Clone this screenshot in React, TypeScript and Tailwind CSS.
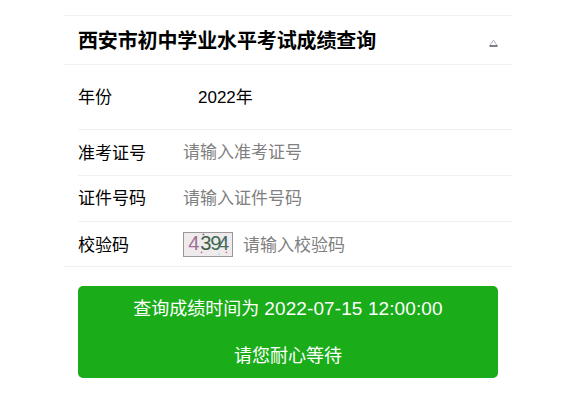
const cjk = "font-['Liberation_Sans','Noto_Sans_CJK_SC',sans-serif]";

function Captcha() {
  return (
    <svg width="50" height="25" viewBox="0 0 50 25" className="mt-[1px] block shrink-0 border border-[#999] bg-[#efeaec]">
      <text y="19" fontSize="22" fontFamily="Liberation Sans">
        <tspan x="3.5" fill="#a06f97">4</tspan>
        <tspan x="16.5" fill="#3c5f4a">3</tspan>
        <tspan x="27.5" fill="#3d6a55">9</tspan>
        <tspan x="36" fill="#4a6a5c">4</tspan>
      </text>
      <circle cx="20" cy="1.5" r="1" fill="#8a5a9a" />
      <circle cx="18" cy="21" r="1" fill="#b5708a" />
      <circle cx="37" cy="23" r="1" fill="#a8dbe4" />
      <circle cx="45" cy="21" r="1" fill="#c080a8" />
      <circle cx="44" cy="8" r="1" fill="#4a6a8a" />
    </svg>
  );
}

export default function App() {
  return (
    <div className={`${cjk} min-h-[412px] bg-white pt-[15px] text-[17px] text-black`}>
      <div className="ml-[64px] w-[448px]">
        <div className="flex h-[50px] items-center justify-between border-y border-[#f1f1f1] pl-[14px] pr-[15px]">
          <h1 className="pt-[1px] text-[20px] font-bold leading-none tracking-[-0.13px]">西安市初中学业水平考试成绩查询</h1>
          <svg width="9" height="8" viewBox="0 0 9 8" className="mt-[5px] mr-[-1px]">
            <path d="M4.5 1 L1 6.5 M4.5 1 L8 6.5" stroke="#a9b4c0" strokeWidth="1" fill="none" />
            <path d="M0.5 7 H8.5" stroke="#000" strokeWidth="1" />
          </svg>
        </div>

        <div className="pl-[14px]">
          <div className="flex h-[65px] items-center border-b border-[#f1f1f1]">
            <span className="w-[120px] pt-[2px]">年份</span>
            <span className="pt-[1px]">2022年</span>
          </div>
          <div className="flex h-[46px] items-center border-b border-[#f1f1f1]">
            <span className="w-[105px] pt-[2px]">准考证号</span>
            <span className="text-[#808080]">请输入准考证号</span>
          </div>
          <div className="flex h-[46px] items-center border-b border-[#f1f1f1]">
            <span className="w-[105px]">证件号码</span>
            <span className="text-[#808080]">请输入证件号码</span>
          </div>
        </div>

        <div className="flex h-[45px] items-center border-b border-[#f1f1f1] pl-[14px]">
          <span className="w-[105px] pt-[3px]">校验码</span>
          <Captcha />
          <span className="ml-[10px] pt-[3px] text-[#808080]">请输入校验码</span>
        </div>

        <div className="mt-[19px] px-[14px]">
          <div className="flex h-[92px] w-[420px] flex-col items-center justify-center rounded-[5px] bg-[#1aad19] text-[18px] leading-[46px] text-white">
            <div className="pt-[1px]">查询成绩时间为 <span className="text-[19px] tracking-[0.1px]">2022-07-15 12:00:00</span></div>
            <div className="pt-[1px]">请您耐心等待</div>
          </div>
        </div>
      </div>
    </div>
  );
}
